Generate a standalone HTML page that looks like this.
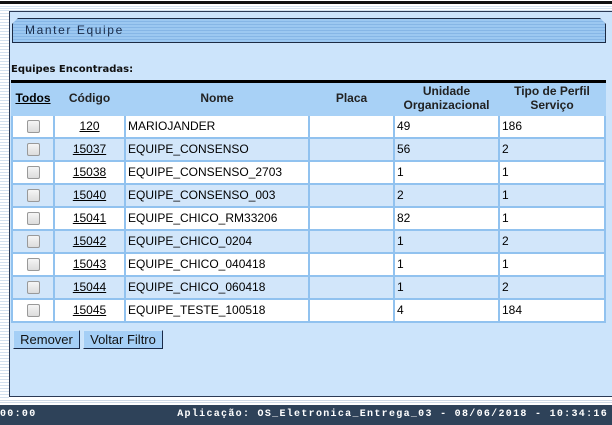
<!DOCTYPE html>
<html><head><style>
body{margin:0;width:612px;height:425px;overflow:hidden;background:#fff;font-family:"Liberation Sans",Arial,sans-serif;position:relative}
.topl{position:absolute;left:0;top:1px;width:612px;height:3px;background:#111}
.topstr{position:absolute;left:0;top:5px;width:612px;height:6px;background:repeating-linear-gradient(#fff 0 1px,#d5e3f0 1px 2px)}
.lstr{position:absolute;left:0;top:11px;width:9px;height:388px;background:repeating-linear-gradient(#fff 0 2px,#d3e0ee 2px 3px)}
.panel{position:absolute;left:9px;top:11px;width:610px;height:386px;background:#cce4fb;border:1px solid #2b3a55;box-sizing:border-box}
.title{position:absolute;left:12px;top:18px;width:594px;height:25px;box-sizing:border-box;border:1px solid #1c2b44;background:repeating-linear-gradient(#9cc8f1 0 2px,#86b6e6 2px 3px);clip-path:polygon(6px 0,588px 0,594px 6px,594px 25px,0 25px,0 6px);border-radius:6px 6px 0 0}
.title span{position:absolute;left:12px;top:4px;font-size:12px;letter-spacing:1.6px;color:#1a2c4a;font-family:"Liberation Sans",sans-serif}
.lbl{position:absolute;left:11px;top:64px;font-size:10px;font-weight:bold;color:#111;font-family:"DejaVu Sans",sans-serif}
table{position:absolute;left:11px;top:80px;border-collapse:collapse;border-top:3px solid #000;font-size:12px;font-family:"Liberation Sans",Arial,sans-serif;table-layout:fixed}
th,td{font-family:"Liberation Sans",Arial,sans-serif}
th{background:#a8d1f6;font-weight:bold;color:#222;height:30px;padding:0;line-height:14px;border:2px solid #a8d1f6}
tr{height:23px}
td{border:2px solid #91c2ef;height:19px;padding:0 2px;color:#000}
tr.w td{background:#fff}tr.b td{background:#d2e6fa}
td.c{text-align:center}
.cb{display:inline-block;width:11px;height:11px;border:1px solid #999;border-radius:2px;background:linear-gradient(#f5f5f5,#dcdcdc);vertical-align:middle}
u{color:#000}
.btn{position:absolute;top:330px;height:19px;box-sizing:border-box;background:#a5cff6;border:1px solid #26365a;border-color:#cfe6fb #1a2a48 #1a2a48 #cfe6fb;font-size:13px;line-height:17px;text-align:center;color:#111;font-family:"Liberation Sans",sans-serif}
.foot{position:absolute;left:0;top:405px;width:612px;height:20px;background:#2e4259;color:#fff;font-size:10px;font-weight:bold;letter-spacing:1.3px;font-family:"Liberation Mono",monospace}
.sep{position:absolute;left:0;top:399px;width:612px;height:5px;background:repeating-linear-gradient(#fff 0 1px,#d0dbe8 1px 2px)}
</style></head><body>
<div class="topl"></div><div class="topstr"></div><div class="lstr"></div>
<div class="panel"></div>
<div class="title"><span>Manter Equipe</span></div>
<div class="lbl">Equipes Encontradas:</div>
<table>
<colgroup><col style="width:42px"><col style="width:71px"><col style="width:184px"><col style="width:85px"><col style="width:105px"><col style="width:106px"></colgroup>
<tr style="height:33px"><th><u>Todos</u></th><th>Código</th><th>Nome</th><th>Placa</th><th>Unidade<br>Organizacional</th><th>Tipo de Perfil<br>Serviço</th></tr>
<tr class="w"><td class="c"><span class="cb"></span></td><td class="c"><u>120</u></td><td>MARIOJANDER</td><td></td><td>49</td><td>186</td></tr>
<tr class="b"><td class="c"><span class="cb"></span></td><td class="c"><u>15037</u></td><td>EQUIPE_CONSENSO</td><td></td><td>56</td><td>2</td></tr>
<tr class="w"><td class="c"><span class="cb"></span></td><td class="c"><u>15038</u></td><td>EQUIPE_CONSENSO_2703</td><td></td><td>1</td><td>1</td></tr>
<tr class="b"><td class="c"><span class="cb"></span></td><td class="c"><u>15040</u></td><td>EQUIPE_CONSENSO_003</td><td></td><td>2</td><td>1</td></tr>
<tr class="w"><td class="c"><span class="cb"></span></td><td class="c"><u>15041</u></td><td>EQUIPE_CHICO_RM33206</td><td></td><td>82</td><td>1</td></tr>
<tr class="b"><td class="c"><span class="cb"></span></td><td class="c"><u>15042</u></td><td>EQUIPE_CHICO_0204</td><td></td><td>1</td><td>2</td></tr>
<tr class="w"><td class="c"><span class="cb"></span></td><td class="c"><u>15043</u></td><td>EQUIPE_CHICO_040418</td><td></td><td>1</td><td>1</td></tr>
<tr class="b"><td class="c"><span class="cb"></span></td><td class="c"><u>15044</u></td><td>EQUIPE_CHICO_060418</td><td></td><td>1</td><td>2</td></tr>
<tr class="w"><td class="c"><span class="cb"></span></td><td class="c"><u>15045</u></td><td>EQUIPE_TESTE_100518</td><td></td><td>4</td><td>184</td></tr>
</table>
<div class="btn" style="left:13px;width:67px">Remover</div>
<div class="btn" style="left:83px;width:80px">Voltar Filtro</div>
<div class="sep"></div>
<div class="foot"><span style="position:absolute;left:0;top:4px">00:00</span><span style="position:absolute;right:4px;top:4px">Aplicação: OS_Eletronica_Entrega_03 - 08/06/2018 - 10:34:16</span></div>
</body></html>
